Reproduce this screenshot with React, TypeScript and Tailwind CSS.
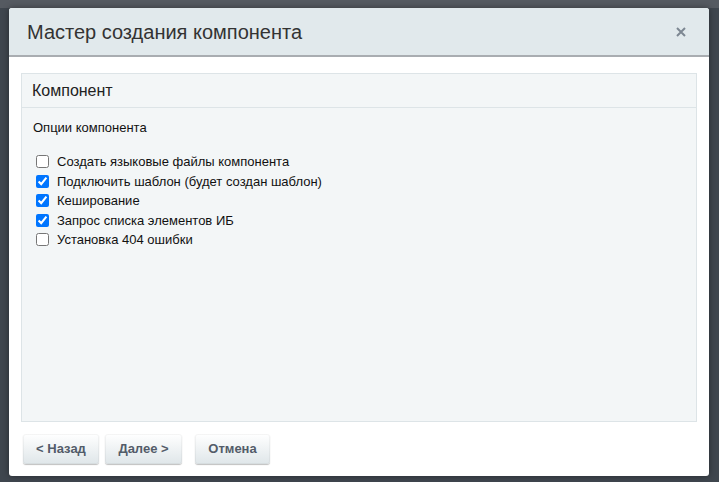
import React from "react";

const options = [
  { label: "Создать языковые файлы компонента", checked: false },
  { label: "Подключить шаблон (будет создан шаблон)", checked: true },
  { label: "Кеширование", checked: true },
  { label: "Запрос списка элементов ИБ", checked: true },
  { label: "Установка 404 ошибки", checked: false },
];

function Btn({ children, className = "" }: { children: React.ReactNode; className?: string }) {
  return (
    <button
      className={
        "h-[30px] rounded-[3px] bg-gradient-to-b from-[#ffffff] to-[#dfe6e9] text-[13px] font-bold text-[#535c69] shadow-[0_1px_1px_rgba(0,0,0,0.25),inset_0_0_0_1px_rgba(0,0,0,0.04)] " +
        className
      }
    >
      {children}
    </button>
  );
}

export default function App() {
  return (
    <div
      className="relative h-[482px] w-[719px] overflow-hidden bg-[#3f464e]"
      style={{ fontFamily: '"Liberation Sans", Arial, sans-serif' }}
    >
      <div className="absolute left-0 top-0 h-[8px] w-full bg-[#555a61]" />
      <div className="absolute left-[9px] top-[8px] flex h-[468px] w-[700px] flex-col overflow-hidden rounded-[3px] bg-white shadow-[0_0_6px_rgba(0,0,0,0.4)]">
        <div className="flex h-[49px] shrink-0 items-center justify-between border-b-2 border-[#a9adb1] bg-[#e1e9ec] pl-[18px] pr-[23px]">
          <span className="text-[20px] text-[#333]">Мастер создания компонента</span>
          <svg width="10" height="10" viewBox="0 0 10 10" className="mt-[1px]">
            <path d="M1 1 L9 9 M9 1 L1 9" stroke="#7d8792" strokeWidth="2" />
          </svg>
        </div>
        <div className="flex flex-1 flex-col px-[12px] pt-[16px]">
          <div className="flex h-[349px] flex-col border border-[#dde4e7] bg-[#f3f6f7]">
            <div className="flex h-[34px] shrink-0 items-center border-b border-[#dde4e7] pl-[10px] text-[16px] text-[#222]">
              Компонент
            </div>
            <div className="pl-[11px] pt-[12px] text-[13px] text-[#111]">
              <div className="h-[16px] leading-[16px]">Опции компонента</div>
              <div className="mt-[16px] flex flex-col">
                {options.map((o) => (
                  <label key={o.label} className="flex h-[19.5px] items-center">
                    <input
                      type="checkbox"
                      defaultChecked={o.checked}
                      className="m-0 ml-[3px] mr-[8px] h-[13px] w-[13px] accent-[#0075ff]"
                    />
                    <span>{o.label}</span>
                  </label>
                ))}
              </div>
            </div>
          </div>
          <div className="mt-[12px] flex items-center pl-[2px]">
            <Btn className="w-[76px]">&lt; Назад</Btn>
            <Btn className="ml-[6px] w-[77px]">Далее &gt;</Btn>
            <Btn className="ml-[13px] w-[75px]">Отмена</Btn>
          </div>
        </div>
      </div>
    </div>
  );
}
